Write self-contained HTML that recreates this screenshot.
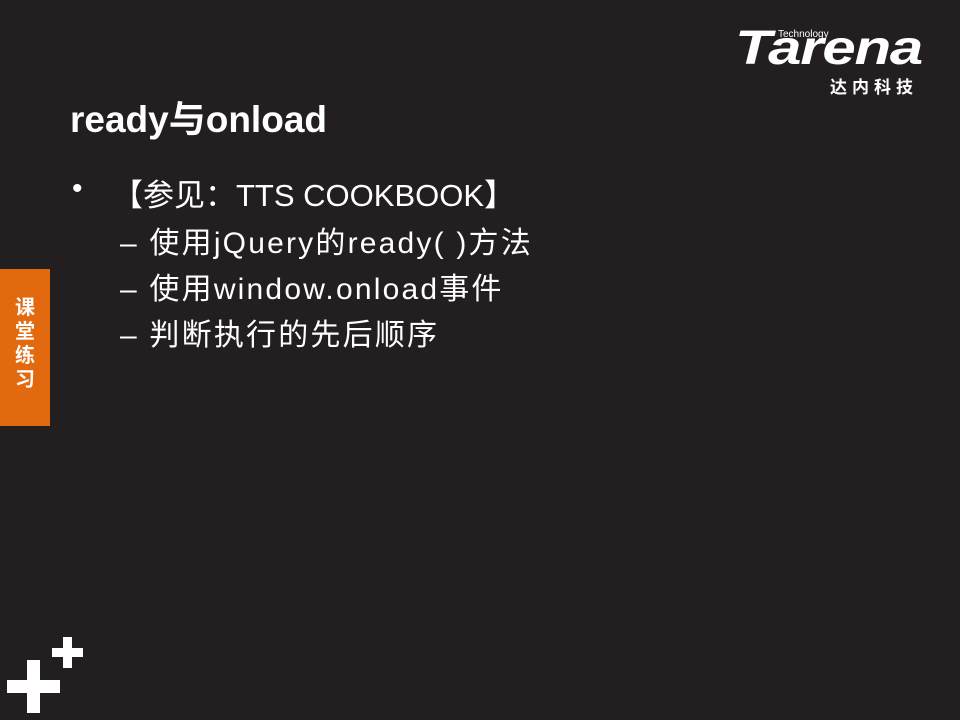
<!DOCTYPE html>
<html><head><meta charset="utf-8"><style>
body{margin:0;width:960px;height:720px;background:#231f20;position:relative;overflow:hidden;font-family:"Liberation Sans","Noto Sans CJK SC",sans-serif;color:#fff}
.a{position:absolute;white-space:nowrap}
.w{position:absolute;background:#fff}
.s{letter-spacing:2.2px}
</style></head><body>
<div class="a" style="left:70px;top:89px;font-size:37px;font-weight:bold;letter-spacing:0px">ready与onload</div>
<div class="a" style="left:72px;top:172px;font-size:30px">•</div>
<div class="a" style="left:112px;top:170px;font-size:31px">【参见：TTS COOKBOOK】</div>
<div class="a s" style="left:120px;top:218px;font-size:30px">– 使用jQuery的ready( )方法</div>
<div class="a s" style="left:120px;top:264px;font-size:30px">– 使用window.onload事件</div>
<div class="a s" style="left:120px;top:310px;font-size:30px">– 判断执行的先后顺序</div>
<div class="a" style="left:0;top:269px;width:50px;height:157px;background:#e3690e"></div>
<div class="a" style="left:13px;top:296px;width:24px;font-size:20px;font-weight:bold;line-height:24px;white-space:normal;text-align:center">课堂练习</div>
<div class="a" style="left:735px;top:25px;font-size:48px;font-weight:bold;font-style:italic;letter-spacing:-1px;line-height:48px;transform:scaleX(1.25);transform-origin:0 0">Tarena</div>
<div class="a" style="left:778px;top:29px;font-size:10px">Technology</div>
<div class="a" style="left:830px;top:73px;font-size:17px;font-weight:bold;letter-spacing:5px">达内科技</div>
<div class="w" style="left:7px;top:680px;width:53px;height:13px"></div>
<div class="w" style="left:27px;top:660px;width:13px;height:53px"></div>
<div class="w" style="left:52px;top:648px;width:31px;height:9px"></div>
<div class="w" style="left:63px;top:637px;width:9px;height:31px"></div>
</body></html>
